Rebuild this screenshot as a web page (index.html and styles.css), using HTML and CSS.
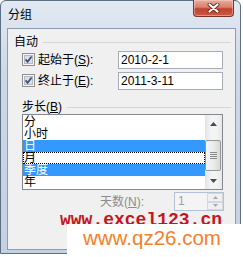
FILE: index.html
```html
<!DOCTYPE html>
<html lang="zh-CN">
  <head>
    <meta charset="UTF-8" />
    <meta name="viewport" content="width=device-width, initial-scale=1.0" />
    <title>分组</title>
    <link rel="stylesheet" href="styles.css">
  </head>
  <body>
    <div class="window">
      <!-- Title bar -->
      <div class="titlebar">
        <span class="title">分组</span>
        <button class="close-btn" aria-label="关闭">
          <svg width="13" height="10" viewBox="0 0 13 10">
            <path d="M2.5 1.5 L10.5 8.5 M10.5 1.5 L2.5 8.5" stroke="#6b2219" stroke-width="3.8" stroke-linecap="round" />
            <path d="M2.5 1.5 L10.5 8.5 M10.5 1.5 L2.5 8.5" stroke="#fff" stroke-width="2.2" stroke-linecap="round" />
          </svg>
        </button>
      </div>

      <div class="client">
        <div class="section-head">
          <span>自动</span><i class="rule"></i>
        </div>

        <div class="field-row">
          <label class="check-label">
            <svg class="checkbox" width="13" height="13" viewBox="0 0 13 13">
              <rect x="0.5" y="0.5" width="12" height="12" fill="#f6f6f6" stroke="#8e8f8f" />
              <rect x="2.5" y="2.5" width="8" height="8" fill="#dcdfe5" stroke="#b4b8c0" />
              <path d="M3.6 6.4 L5.6 8.8 L9.6 3.4" fill="none" stroke="#3f4f7c" stroke-width="1.7" />
            </svg>
            起始于(<u>S</u>):
          </label>
          <div class="text-box">2010-2-1</div>
        </div>

        <div class="field-row">
          <label class="check-label">
            <svg class="checkbox" width="13" height="13" viewBox="0 0 13 13">
              <rect x="0.5" y="0.5" width="12" height="12" fill="#f6f6f6" stroke="#8e8f8f" />
              <rect x="2.5" y="2.5" width="8" height="8" fill="#dcdfe5" stroke="#b4b8c0" />
              <path d="M3.6 6.4 L5.6 8.8 L9.6 3.4" fill="none" stroke="#3f4f7c" stroke-width="1.7" />
            </svg>
            终止于(<u>E</u>):
          </label>
          <div class="text-box">2011-3-11</div>
        </div>

        <div class="section-head step-head">
          <span>步长(<u>B</u>)</span><i class="rule"></i>
        </div>

        <div class="listbox">
          <ul class="list-items">
            <li>分</li>
            <li>小时</li>
            <li class="selected">日</li>
            <li class="focused">月</li>
            <li class="selected">季度</li>
            <li>年</li>
          </ul>
          <div class="scrollbar">
            <div class="sb-btn">
              <svg width="7" height="4" viewBox="0 0 7 4"><polygon points="0,4 3.5,0 7,4" fill="#4a4a4a" /></svg>
            </div>
            <div class="sb-track">
              <div class="sb-thumb">
                <svg width="7" height="8" viewBox="0 0 7 8">
                  <path d="M0 0.5 H7 M0 2.5 H7 M0 4.5 H7 M0 6.5 H7" stroke="#8a8a8a" stroke-width="1" />
                </svg>
              </div>
            </div>
            <div class="sb-btn">
              <svg width="7" height="4" viewBox="0 0 7 4"><polygon points="0,0 3.5,4 7,0" fill="#4a4a4a" /></svg>
            </div>
          </div>
        </div>

        <div class="days-row">
          <span class="days-label">天数(<u>N</u>):</span>
          <div class="spin">
            <span class="spin-value">1</span>
            <div class="spin-btns">
              <span><svg width="5" height="3" viewBox="0 0 5 3"><polygon points="0,3 2.5,0 5,3" fill="#a8a8a8" /></svg></span>
              <span><svg width="5" height="3" viewBox="0 0 5 3"><polygon points="0,0 2.5,3 5,0" fill="#a8a8a8" /></svg></span>
            </div>
          </div>
        </div>
      </div>
    </div>

    <!-- Watermarks -->
    <div class="watermark-red">www.excel123.cn</div>
    <div class="watermark-box">www.qz26.com</div>
  </body>
</html>
```

FILE: styles.css
```css
/* General styles */
* {
  box-sizing: border-box;
}

body {
  margin: 0;
  width: 243px;
  height: 257px;
  overflow: hidden;
  position: relative;
  background: #fff;
  font-family: "Liberation Sans", "Noto Sans CJK SC", sans-serif;
  font-size: 12px;
  color: #000;
}

/* Window frame */
.window {
  width: 241px;
  height: 254px;
  border: 1px solid #5f6f82;
  border-radius: 6px 6px 0 0;
  background: linear-gradient(to bottom, #e2e9f2, #cbd8e7 30%, #c2d2e4);
  padding: 0 4px 3px 6px;
  display: flex;
  flex-direction: column;
}

.titlebar {
  height: 27px;
  flex: none;
  display: flex;
  justify-content: space-between;
  align-items: flex-start;
}

.title {
  margin: 7px 0 0 1px;
  line-height: 14px;
  color: #000;
}

.close-btn {
  width: 41px;
  height: 17px;
  margin: -1px 2px 0 0;
  padding: 0;
  border: 1px solid #7c3328;
  border-top: none;
  border-radius: 0 0 4px 4px;
  background: linear-gradient(to bottom, #e9ad9e, #d9806d 45%, #c3402f 55%, #c95a40);
  box-shadow: inset 0 0 0 1px rgba(255, 220, 210, 0.45);
  display: flex;
  align-items: center;
  justify-content: center;
}

/* Client area */
.client {
  height: 222px;
  flex: none;
  border: 1px solid #8d9db1;
  background: #f0f0f0;
  padding: 6px 4px 0 6px;
}

.section-head {
  height: 14px;
  line-height: 14px;
  display: flex;
  align-items: center;
}

.section-head .rule {
  flex: 1;
  height: 0;
  margin-left: 5px;
  border-top: 1px solid #d5d5d5;
}

.step-head {
  margin: 9px 0 0 8px;
}

.field-row {
  height: 21px;
  margin: 0 7px 0 8px;
  display: flex;
  align-items: center;
}

.check-label {
  width: 96px;
  flex: none;
  display: flex;
  align-items: center;
  line-height: 14px;
}

.checkbox {
  flex: none;
  margin-right: 3px;
}

.text-box {
  width: 105px;
  height: 18px;
  border: 1px solid #a5acb5;
  background: #fff;
  padding: 0 2px;
  line-height: 16px;
}

/* List box */
.listbox {
  width: 201px;
  height: 76px;
  margin: 0 7px 0 8px;
  border: 1px solid #828790;
  background: #fff;
  display: flex;
}

.list-items {
  list-style: none;
  margin: 0;
  padding: 1px 0;
  flex: 1;
}

.list-items li {
  height: 12px;
  line-height: 12px;
  padding-left: 1px;
}

.list-items li.selected {
  background: #3399ff;
  color: #fff;
}

.list-items li.focused {
  outline: 1px dotted #000;
  outline-offset: -1px;
}

.scrollbar {
  width: 17px;
  flex: none;
  display: flex;
  flex-direction: column;
  background: linear-gradient(to right, #e4e4e4, #f4f4f4 35%, #f4f4f4 65%, #e8e8e8);
}

.sb-btn {
  height: 17px;
  display: flex;
  align-items: center;
  justify-content: center;
}

.sb-track {
  flex: 1;
  padding: 8px 1px 1px 0;
  display: flex;
  flex-direction: column;
}

.sb-thumb {
  flex: 1;
  border: 1px solid #979797;
  border-radius: 2px;
  background: linear-gradient(to right, #f6f6f6, #ececec 50%, #d9d9d9);
  display: flex;
  align-items: center;
  justify-content: center;
}

/* Days spinner */
.days-row {
  height: 19px;
  margin: 2px 7px 0 8px;
  display: flex;
  justify-content: flex-end;
  align-items: center;
}

.days-label {
  color: #8c8c8c;
  line-height: 14px;
}

.spin {
  width: 50px;
  height: 19px;
  margin-left: 30px;
  border: 1px solid #b5c2d3;
  background: #f4f4f4;
  display: flex;
}

.spin-value {
  flex: 1;
  padding-left: 3px;
  line-height: 17px;
  color: #a0a0a0;
}

.spin-btns {
  width: 16px;
  display: flex;
  flex-direction: column;
}

.spin-btns span {
  flex: 1;
  border: 1px solid #d3d8de;
  background: #f0f0f0;
  display: flex;
  align-items: center;
  justify-content: center;
}

/* Watermarks laid over the dialog */
.watermark-red {
  position: absolute;
  left: 60px;
  top: 211px;
  font: bold 18px/18px "Liberation Mono", monospace;
  color: #c4161c;
}

.watermark-box {
  position: absolute;
  left: 67px;
  top: 224px;
  right: 0;
  bottom: 0;
  background: #fff;
  padding: 2px 0 0 16px;
  font: 20.5px/23px "Liberation Sans", sans-serif;
  color: #f5802a;
}
```
